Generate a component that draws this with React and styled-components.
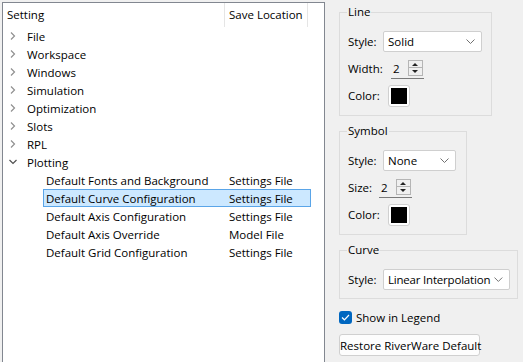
import React from 'react';
import styled, { createGlobalStyle } from 'styled-components';

const GlobalStyle = createGlobalStyle`
  html, body {
    margin: 0;
    padding: 0;
    background: #f0f0f0;
    overflow: hidden;
  }
  body {
    font-family: 'Open Sans', 'Noto Sans', sans-serif;
    font-size: 11.5px;
    color: #000;
  }
`;

const settings = [
  { name: 'File' },
  { name: 'Workspace' },
  { name: 'Windows' },
  { name: 'Simulation' },
  { name: 'Optimization' },
  { name: 'Slots' },
  { name: 'RPL' },
  {
    name: 'Plotting',
    open: true,
    children: [
      { name: 'Default Fonts and Background', location: 'Settings File' },
      { name: 'Default Curve Configuration', location: 'Settings File', selected: true },
      { name: 'Default Axis Configuration', location: 'Settings File' },
      { name: 'Default Axis Override', location: 'Model File' },
      { name: 'Default Grid Configuration', location: 'Settings File' },
    ],
  },
];

const Chevron = ({ open }) => (
  <svg width="8" height="8" viewBox="0 0 8 8">
    {open ? (
      <polyline points="0.5,2 4,5.5 7.5,2" fill="none" stroke="#505050" strokeWidth="1.2" />
    ) : (
      <polyline points="2,0.5 5.5,4 2,7.5" fill="none" stroke="#909090" strokeWidth="1.2" />
    )}
  </svg>
);

const DropArrow = () => (
  <svg width="9" height="5" viewBox="0 0 9 5">
    <polyline points="0.5,0.5 4.5,4.5 8.5,0.5" fill="none" stroke="#707070" strokeWidth="1" />
  </svg>
);

const Spinner = () => (
  <Spin>
    <span>2</span>
    <SpinButtons>
      <SpinArrow up />
      <SpinArrow />
    </SpinButtons>
  </Spin>
);

const App = () => {
  return (
    <>
      <GlobalStyle />
      <Page>
        <TreePanel>
          <Header>
            <HeadCell width={222}>Setting</HeadCell>
            <HeadCell width={84} divider>Save Location</HeadCell>
          </Header>
          {settings.map((s) => (
            <React.Fragment key={s.name}>
              <Row>
                <Toggle>
                  <Chevron open={s.open} />
                </Toggle>
                <span>{s.name}</span>
              </Row>
              {s.open &&
                s.children.map((c) => (
                  <ChildRow key={c.name} selected={c.selected}>
                    <ChildName>{c.name}</ChildName>
                    <ChildLocation>{c.location}</ChildLocation>
                  </ChildRow>
                ))}
            </React.Fragment>
          ))}
        </TreePanel>

        <Side>
          <Group width={153}>
            <legend>Line</legend>
            <FieldRow>
              <Label width={35}>Style:</Label>
              <Combo width={99}>
                <span>Solid</span>
                <DropArrow />
              </Combo>
            </FieldRow>
            <FieldRow>
              <Label width={43}>Width:</Label>
              <Spinner />
            </FieldRow>
            <FieldRow>
              <Label width={40}>Color:</Label>
              <Swatch />
            </FieldRow>
          </Group>

          <Group width={128}>
            <legend>Symbol</legend>
            <FieldRow>
              <Label width={35}>Style:</Label>
              <Combo width={73}>
                <span>None</span>
                <DropArrow />
              </Combo>
            </FieldRow>
            <FieldRow>
              <Label width={31}>Size:</Label>
              <Spinner />
            </FieldRow>
            <FieldRow>
              <Label width={40}>Color:</Label>
              <Swatch />
            </FieldRow>
          </Group>

          <Group width={179} tight>
            <legend>Curve</legend>
            <FieldRow>
              <Label width={35}>Style:</Label>
              <Combo width={127}>
                <ComboText>Linear Interpolation</ComboText>
                <DropArrow />
              </Combo>
            </FieldRow>
          </Group>

          <CheckRow>
            <CheckBox>
              <svg width="9" height="7" viewBox="0 0 9 7">
                <polyline points="1,3.5 3.4,5.8 8,1" fill="none" stroke="#fff" strokeWidth="1.2" />
              </svg>
            </CheckBox>
            <span>Show in Legend</span>
          </CheckRow>

          <Button>Restore RiverWare Default</Button>
        </Side>
      </Page>
    </>
  );
};

const Page = styled.div`
  display: flex;
  align-items: flex-start;
  padding: 2px 0 0 2px;
  height: 360px;
  overflow: hidden;
`;

const TreePanel = styled.div`
  width: 321px;
  height: 380px;
  background: #fff;
  border: 1px solid #828790;
  flex-shrink: 0;
`;

const Header = styled.div`
  display: flex;
  height: 24px;
`;

const HeadCell = styled.div`
  width: ${(p) => p.width}px;
  box-sizing: border-box;
  padding: 4px 0 0 4px;
  border-left: ${(p) => (p.divider ? '1px solid #e5e5e5' : 'none')};
  border-right: 1px solid #e5e5e5;
  margin-left: ${(p) => (p.divider ? -1 : 0)}px;
`;

const Row = styled.div`
  display: flex;
  align-items: center;
  height: 18px;
  padding-left: 6px;
`;

const Toggle = styled.span`
  width: 18px;
  display: flex;
  align-items: center;
`;

const ChildRow = styled.div`
  display: flex;
  align-items: center;
  height: 18px;
  margin-left: 40px;
  width: 268px;
  box-sizing: border-box;
  background: ${(p) => (p.selected ? '#cce8ff' : 'transparent')};
  border: 1px solid ${(p) => (p.selected ? '#5aa5e8' : 'transparent')};
`;

const ChildName = styled.span`
  width: 182px;
  padding-left: 2px;
`;

const ChildLocation = styled.span`
  padding-left: 1px;
`;

const Side = styled.div`
  display: flex;
  flex-direction: column;
  align-items: flex-start;
  margin-left: 14px;
`;

const Group = styled.fieldset`
  width: ${(p) => p.width}px;
  box-sizing: border-box;
  margin: 2px 0 5px;
  padding: 8px 0 ${(p) => (p.tight ? 5 : 6)}px 8px;
  border: 1px solid #dcdcdc;
  border-radius: 0;
  min-width: 0;

  legend {
    padding: 0 1px;
    margin-left: -1px;
    line-height: 16px;
  }
`;

const FieldRow = styled.div`
  display: flex;
  align-items: center;
  height: 27px;
  white-space: nowrap;
`;

const Label = styled.span`
  width: ${(p) => p.width}px;
  flex-shrink: 0;
`;

const Combo = styled.div`
  width: ${(p) => p.width}px;
  height: 21px;
  box-sizing: border-box;
  background: #fff;
  border: 1px solid #cfcfcf;
  border-radius: 2px;
  display: flex;
  align-items: center;
  justify-content: space-between;
  gap: 4px;
  padding: 0 6px 0 4px;
  flex-shrink: 0;
`;

const ComboText = styled.span`
  letter-spacing: -0.2px;
`;

const Spin = styled.div`
  width: 33px;
  height: 20px;
  box-sizing: border-box;
  border-bottom: 1px solid #7a7a7a;
  display: flex;
  align-items: center;
  justify-content: space-between;
  padding-left: 2px;
`;

const SpinButtons = styled.div`
  width: 15px;
  height: 16px;
  border: 1px solid #b5b5b5;
  box-sizing: border-box;
  background: #f0f0f0;
  display: flex;
  flex-direction: column;
  margin-right: 1px;
  margin-top: -1px;
`;

const SpinArrow = styled.div`
  flex: 1;
  position: relative;
  ${(p) => p.up && 'border-bottom: 1px solid #b5b5b5;'}
  &::after {
    content: '';
    position: absolute;
    left: 3px;
    top: 2px;
    border-left: 3.5px solid transparent;
    border-right: 3.5px solid transparent;
    ${(p) => (p.up ? 'border-bottom: 3px solid #222;' : 'border-top: 3px solid #222;')}
  }
`;

const Swatch = styled.div`
  width: 22px;
  height: 22px;
  box-sizing: border-box;
  background: #fff;
  border: 1px solid #d0d0d0;
  border-radius: 3px;
  padding: 2px;
  &::after {
    content: '';
    display: block;
    width: 100%;
    height: 100%;
    background: #000;
  }
`;

const CheckRow = styled.div`
  display: flex;
  align-items: center;
  gap: 4px;
  margin-top: 4px;
  height: 18px;
`;

const CheckBox = styled.span`
  width: 13px;
  height: 13px;
  border-radius: 3px;
  background: #0067c0;
  display: flex;
  align-items: center;
  justify-content: center;
`;

const Button = styled.button`
  margin-top: 8px;
  height: 22px;
  width: 141px;
  padding: 0;
  font: inherit;
  color: #000;
  background: #fdfdfd;
  border: 1px solid #d0d0d0;
  border-radius: 3px;
  white-space: nowrap;
`;

export default App;
